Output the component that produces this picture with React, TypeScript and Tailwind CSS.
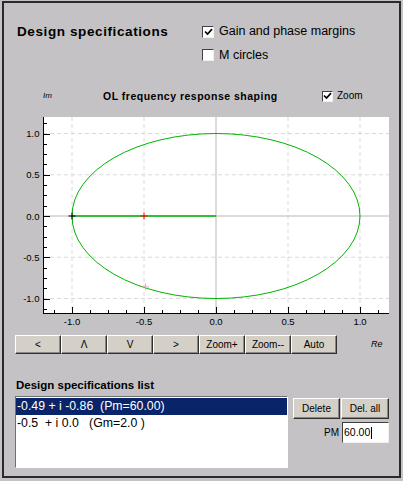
import React from 'react';

const X0 = 212;
const Y0 = 106;
const SX = 144;
const SY = 82.5;
const L = 39;
const R = 385;
const T = 7;
const B = 204;
const px = (v: number) => X0 + v * SX;
const py = (v: number) => Y0 - v * SY;

function CheckBox({ checked, small }: { checked?: boolean; small?: boolean }) {
  return (
    <div
      className={`${small ? 'w-[11px] h-[11px]' : 'w-[12px] h-[12px]'} shrink-0 bg-white border border-t-[#404040] border-l-[#404040] border-r-[#f0f0f0] border-b-[#f0f0f0] flex items-center justify-center`}
    >
      {checked && (
        <svg width="9" height="8" viewBox="0 0 9 8">
          <path d="M1 3.5 L3.5 6 L8 1.2" fill="none" stroke="#000" strokeWidth="1.7" />
        </svg>
      )}
    </div>
  );
}

function Btn({ label, w, h }: { label: string; w: string; h: string }) {
  return (
    <div
      className={`${w} ${h} shrink-0 bg-[#d4d0c8] border border-t-white border-l-white border-r-[#303030] border-b-[#303030] shadow-[inset_-1px_-1px_0_#888] flex items-center justify-center text-[10px] leading-none text-black`}
    >
      {label}
    </div>
  );
}

function Cross({ x, y, color }: { x: number; y: number; color: string }) {
  return (
    <g stroke={color} strokeWidth="1">
      <line x1={x - 3.5} y1={y} x2={x + 3.5} y2={y} />
      <line x1={x} y1={y - 3.5} x2={x} y2={y + 3.5} />
    </g>
  );
}

function Plot() {
  const major = [-1, -0.5, 0.5, 1];
  const xticks: number[] = [];
  const yticks: number[] = [];
  for (let i = -9; i <= 9; i++) {
    const v = i * 0.125;
    if (px(v) > L && px(v) <= R) xticks.push(v);
    if (py(v) < B && py(v) >= T) yticks.push(v);
  }
  const isMajor = (v: number) => Math.abs(v * 2 - Math.round(v * 2)) < 1e-6;

  return (
    <svg width="395" height="222" className="block">
      <rect x={L} y={T} width={R - L} height={B - T} fill="#fff" />
      {major.map((v) => (
        <g key={v} stroke="#dadada" strokeDasharray="4 3">
          <line x1={px(v)} y1={T} x2={px(v)} y2={B} />
          <line x1={L} y1={py(v)} x2={R} y2={py(v)} />
        </g>
      ))}
      <line x1={px(0)} y1={T} x2={px(0)} y2={B} stroke="#b8b8b8" />
      <line x1={L} y1={py(0)} x2={R} y2={py(0)} stroke="#b8b8b8" />

      <ellipse cx={X0} cy={Y0} rx={SX} ry={SY} fill="none" stroke="#00b400" strokeWidth="1" />
      <line x1={px(-1)} y1={Y0} x2={px(0)} y2={Y0} stroke="#00b400" strokeWidth="1.5" />
      <Cross x={px(-1)} y={Y0} color="#000" />
      <Cross x={px(-0.5)} y={Y0} color="#ff0000" />
      <Cross x={px(-0.49)} y={py(-0.86)} color="#f4a0a0" />

      <line x1={L + 0.5} y1={T} x2={L + 0.5} y2={B} stroke="#000" />
      <line x1={L} y1={B - 0.5} x2={R} y2={B - 0.5} stroke="#000" />
      {yticks.map((v) => (
        <line
          key={'y' + v}
          x1={L}
          y1={Math.round(py(v)) + 0.5}
          x2={L + (isMajor(v) ? 7 : 4)}
          y2={Math.round(py(v)) + 0.5}
          stroke="#000"
        />
      ))}
      {xticks.map((v) => (
        <line
          key={'x' + v}
          x1={Math.round(px(v)) + 0.5}
          y1={B}
          x2={Math.round(px(v)) + 0.5}
          y2={B - (isMajor(v) ? 7 : 4)}
          stroke="#000"
        />
      ))}
      {[-1, -0.5, 0, 0.5, 1].map((v) => (
        <text
          key={'ly' + v}
          x={35.5}
          y={py(v) + 3.5}
          fontSize="9.5"
          textAnchor="end"
          fill="#000"
          fontFamily="Liberation Sans, Arial, sans-serif"
        >
          {v.toFixed(1)}
        </text>
      ))}
      {[-1, -0.5, 0, 0.5, 1].map((v) => (
        <text
          key={'lx' + v}
          x={px(v)}
          y={215}
          fontSize="9.5"
          textAnchor="middle"
          fill="#000"
          fontFamily="Liberation Sans, Arial, sans-serif"
        >
          {v.toFixed(1)}
        </text>
      ))}
    </svg>
  );
}

export default function App() {
  return (
    <div className="w-[403px] h-[481px] bg-[#c4c2c4] pt-[1px] px-[2px] pb-[3px] font-['Liberation_Sans',Arial,sans-serif] text-black">
      <div className="h-full border-2 border-[#2a2a2a] flex flex-col">
        {/* header */}
        <div className="flex pt-[17px] pl-[13px]">
          <div className="w-[185px] h-[23px] flex items-center text-[13.5px] font-bold tracking-[0.6px] leading-none">
            Design specifications
          </div>
          <div className="flex flex-col">
            <div className="h-[23px] flex items-center gap-[5px]">
              <CheckBox checked />
              <span className="text-[12.5px] leading-none">Gain and phase margins</span>
            </div>
            <div className="h-[24px] flex items-center gap-[5px]">
              <CheckBox />
              <span className="text-[12.5px] leading-none">M circles</span>
            </div>
          </div>
        </div>

        {/* plot title */}
        <div className="flex items-center h-[16px] mt-[21px] pl-[39px]">
          <div className="w-[60px] text-[8px] italic leading-none">Im</div>
          <div className="w-[219px] text-[10.5px] font-bold tracking-[0.5px] leading-none">
            OL frequency response shaping
          </div>
          <CheckBox checked small />
          <span className="ml-[4px] text-[10px] leading-none">Zoom</span>
        </div>

        <div className="mt-[6px]">
          <Plot />
        </div>

        {/* nav buttons */}
        <div className="flex items-center mt-[3px] pl-[11px]">
          {['<', 'Λ', 'V', '>', 'Zoom+', 'Zoom--', 'Auto'].map((b) => (
            <Btn key={b} label={b} w="w-[46px]" h="h-[19px]" />
          ))}
          <span className="ml-[34px] text-[9px] italic leading-none">Re</span>
        </div>

        {/* list */}
        <div className="h-[16px] mt-[24px] pl-[12px] flex items-center text-[11.5px] font-bold leading-none">
          Design specifications list
        </div>
        <div className="flex mt-[2px] pl-[11px]">
          <div className="w-[273px] h-[72px] bg-white border border-t-[#707070] border-l-[#707070] border-r-white border-b-white pt-[1px] text-[12.3px] leading-none whitespace-pre">
            <div className="h-[17px] bg-[#0a246a] text-white flex items-center pl-[1px]">-0.49 + i -0.86  (Pm=60.00)</div>
            <div className="h-[17px] flex items-center pl-[1px]">-0.5  + i 0.0   (Gm=2.0 )</div>
          </div>
          <div className="ml-[4px] w-[97px] flex flex-col">
            <div className="flex gap-[1px] mt-[2px] pl-[1px]">
              <Btn label="Delete" w="w-[47px]" h="h-[21px]" />
              <Btn label="Del. all" w="w-[48px]" h="h-[21px]" />
            </div>
            <div className="flex items-center justify-end mt-[3px]">
              <span className="text-[10px] leading-none mr-[3px]">PM</span>
              <div className="w-[47px] h-[21px] bg-white border border-t-[#404040] border-l-[#404040] border-r-[#f0f0f0] border-b-[#f0f0f0] flex items-center pl-[1px] text-[10.5px] leading-none">
                60.00
                <span className="inline-block w-[1px] h-[12px] bg-black ml-[1px]" />
              </div>
            </div>
          </div>
        </div>
      </div>
    </div>
  );
}
